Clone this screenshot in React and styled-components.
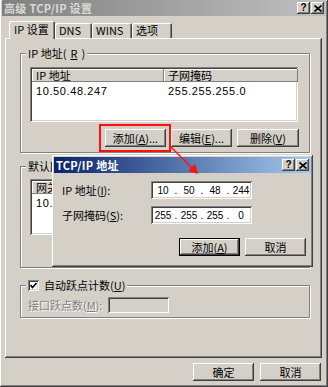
import React from "react";
import styled, { createGlobalStyle, css } from "styled-components";

const GlobalStyle = createGlobalStyle`
  html, body { margin: 0; padding: 0; background: #d4d0c8; }
  body {
    font-family: "Noto Sans CJK SC", "Liberation Sans", sans-serif;
    font-size: 11px;
    color: #000;
  }
  * { box-sizing: border-box; }
`;

// classic 3d edges
const raised = css`
  box-shadow: inset -1px -1px #404040, inset 1px 1px #ffffff,
    inset -2px -2px #808080, inset 2px 2px #d4d0c8;
`;
const sunken = css`
  box-shadow: inset 1px 1px #808080, inset -1px -1px #ffffff,
    inset 2px 2px #404040, inset -2px -2px #d4d0c8;
`;

const Window = styled.div`
  position: relative;
  width: 328px;
  height: 387px;
  padding: 0 2px 2px 2px;
  background: #d4d0c8;
  overflow: hidden;
  ${raised};
`;

const TitleBar = styled.div`
  height: 16px;
  display: flex;
  align-items: center;
  justify-content: space-between;
  padding: 0 2px 0 2px;
  background: ${(p) =>
    p.$active
      ? "linear-gradient(to right, #0a246a, #a6caf0)"
      : "linear-gradient(to right, #808080, #c0c0c0)"};
  color: ${(p) => (p.$active ? "#ffffff" : "#dcd9d2")};
  font-weight: bold;
  font-size: 11px;
  line-height: 14px;
  white-space: nowrap;
`;

const Caption = styled.span`
  letter-spacing: 0.3px;
`;

const CaptionButtons = styled.div`
  display: flex;
  gap: 1px;
`;

const CaptionButton = styled.div`
  width: 13px;
  height: 12px;
  background: #d4d0c8;
  ${raised};
  display: flex;
  align-items: center;
  justify-content: center;
  color: #000;
  font-family: "Liberation Sans", sans-serif;
  font-weight: bold;
  font-size: 10px;
  line-height: 10px;
`;

const Tabs = styled.div`
  display: flex;
  align-items: flex-end;
  height: 17px;
  margin: 5px 0 0 5px;
  position: relative;
  z-index: 1;
`;

const Tab = styled.div`
  width: ${(p) => p.$w}px;
  height: ${(p) => (p.$active ? 18 : 15)}px;
  margin-bottom: ${(p) => (p.$active ? -1 : 0)}px;
  margin-left: ${(p) => p.$ml || 0}px;
  padding: ${(p) => (p.$active ? "1px 0 0 5px" : "0 0 0 4px")};
  background: #d4d0c8;
  border-radius: 2px 2px 0 0;
  box-shadow: inset 1px 1px #ffffff, inset -1px 0 #404040, inset -2px 0 #808080;
  line-height: 15px;
  white-space: nowrap;
`;

const Panel = styled.div`
  width: 317px;
  height: 320px;
  margin-left: 3px;
  padding: 15px 0 0 15px;
  background: #d4d0c8;
  ${raised};
`;

const Group = styled.div`
  position: relative;
  width: 290px;
  height: ${(p) => p.$h}px;
  margin-top: ${(p) => p.$mt || 0}px;
  padding: ${(p) => p.$pad};
  border: 1px solid #808080;
  box-shadow: inset 1px 1px #ffffff, 1px 1px #ffffff;
`;

const Legend = styled.div`
  position: absolute;
  top: -8px;
  left: 5px;
  padding: 0 2px;
  display: flex;
  align-items: center;
  gap: 4px;
  background: #d4d0c8;
  line-height: 15px;
  white-space: nowrap;
`;

const ListView = styled.div`
  width: ${(p) => p.$w}px;
  height: ${(p) => p.$h}px;
  background: #ffffff;
  padding: 2px;
  overflow: hidden;
  ${sunken};
`;

const HeaderRow = styled.div`
  display: flex;
  height: 13px;
`;

const HeaderCell = styled.div`
  width: ${(p) => p.$w}px;
  flex-shrink: 0;
  padding-left: 4px;
  background: #d4d0c8;
  box-shadow: inset -1px -1px #808080, inset 1px 1px #ffffff;
  line-height: 13px;
  white-space: nowrap;
`;

const Row = styled.div`
  display: flex;
  height: 15px;
  align-items: center;
  margin-top: 1px;
`;

const Cell = styled.div`
  width: ${(p) => p.$w}px;
  flex-shrink: 0;
  padding-left: 4px;
  font-family: "Liberation Sans", "Noto Sans CJK SC", sans-serif;
  font-size: 11px;
  letter-spacing: 0.6px;
  white-space: nowrap;
`;

const ButtonRow = styled.div`
  display: flex;
  justify-content: flex-end;
  gap: ${(p) => p.$gap || 5}px;
  margin-top: ${(p) => p.$mt || 0}px;
  padding-right: ${(p) => p.$pr || 0}px;
`;

const Button = styled.div`
  width: ${(p) => p.$w || 61}px;
  height: ${(p) => p.$h || 18}px;
  display: flex;
  align-items: center;
  justify-content: center;
  background: #d4d0c8;
  line-height: 14px;
  white-space: nowrap;
  ${(p) =>
    p.$default
      ? css`
          box-shadow: inset 0 0 0 1px #000, inset -2px -2px #404040,
            inset 2px 2px #ffffff, inset -3px -3px #808080;
        `
      : raised};
`;

const CheckRow = styled.div`
  display: flex;
  align-items: center;
  gap: 5px;
`;

const CheckBox = styled.div`
  width: 11px;
  height: 11px;
  background: #ffffff;
  display: flex;
  align-items: center;
  justify-content: center;
  ${sunken};
`;

const FieldRow = styled.div`
  display: flex;
  align-items: center;
`;

const Label = styled.div`
  width: ${(p) => p.$w}px;
  flex-shrink: 0;
  color: ${(p) => (p.$disabled ? "#808080" : "#000")};
  text-shadow: ${(p) => (p.$disabled ? "1px 1px #ffffff" : "none")};
  white-space: nowrap;
  line-height: 14px;
`;

const TextField = styled.div`
  width: ${(p) => p.$w}px;
  height: ${(p) => p.$h || 18}px;
  background: ${(p) => (p.$disabled ? "#d4d0c8" : "#ffffff")};
  display: flex;
  align-items: center;
  padding-left: 3px;
  ${sunken};
`;

const Octet = styled.span`
  width: 18px;
  text-align: center;
  font-family: "Liberation Sans", sans-serif;
  font-size: 10px;
`;

const Dot = styled.span`
  width: 8px;
  text-align: center;
  font-family: "Liberation Sans", sans-serif;
  font-size: 10px;
`;

const Footer = styled.div`
  display: flex;
  justify-content: flex-end;
  gap: 6px;
  margin-top: 5px;
  padding-right: 5px;
`;

/* overlaid sub-dialog */
const Dialog = styled.div`
  position: absolute;
  left: 52px;
  top: 155px;
  width: 261px;
  height: 112px;
  padding: 2px;
  background: #d4d0c8;
  ${raised};
`;

const DialogBody = styled.div`
  display: flex;
  flex-direction: column;
  gap: 7px;
  padding: 8px 0 0 8px;
`;

const Highlight = styled.div`
  position: absolute;
  left: 99px;
  top: 124px;
  width: 72px;
  height: 28px;
  border: 2px solid #ff1010;
`;

const Arrow = styled.svg`
  position: absolute;
  left: 166px;
  top: 142px;
  pointer-events: none;
`;

const Close = () => (
  <svg width="8" height="7" viewBox="0 0 8 7">
    <path d="M0.5 0.5 L7.5 6.5 M7.5 0.5 L0.5 6.5" stroke="#000" strokeWidth="1.6" />
  </svg>
);

const Check = () => (
  <svg width="7" height="7" viewBox="0 0 7 7">
    <path d="M0.5 3 L2.5 5.5 L6.5 1" stroke="#000" strokeWidth="1.6" fill="none" />
  </svg>
);

const IpField = ({ parts }) => (
  <TextField $w={101}>
    {parts.map((p, i) => (
      <React.Fragment key={i}>
        <Octet>{p}</Octet>
        {i < 3 && <Dot>.</Dot>}
      </React.Fragment>
    ))}
  </TextField>
);

export default function App() {
  return (
    <>
      <GlobalStyle />
      <Window>
        <TitleBar>
          <Caption>高级 TCP/IP 设置</Caption>
          <CaptionButtons>
            <CaptionButton>?</CaptionButton>
            <CaptionButton><Close /></CaptionButton>
          </CaptionButtons>
        </TitleBar>

        <Tabs>
          <Tab $active $w={46} $ml={2}>IP 设置</Tab>
          <Tab $w={37}>DNS</Tab>
          <Tab $w={40}>WINS</Tab>
          <Tab $w={40}>选项</Tab>
        </Tabs>

        <Panel>
          <Group $h={100} $pad="13px 10px 0 9px">
            <Legend>IP 地址(<u>R</u>)</Legend>
            <ListView $w={268} $h={55}>
              <HeaderRow>
                <HeaderCell $w={132}>IP 地址</HeaderCell>
                <HeaderCell $w={134}>子网掩码</HeaderCell>
              </HeaderRow>
              <Row>
                <Cell $w={132}>10.50.48.247</Cell>
                <Cell $w={134}>255.255.255.0</Cell>
              </Row>
            </ListView>
            <ButtonRow $mt={7}>
              <Button>添加(<u>A</u>)...</Button>
              <Button>编辑(<u>E</u>)...</Button>
              <Button $w={62}>删除(<u>V</u>)</Button>
            </ButtonRow>
          </Group>

          <Group $h={102} $mt={13} $pad="12px 10px 0 9px">
            <Legend>默认网关(<u>F</u>):</Legend>
            <ListView $w={268} $h={56}>
              <HeaderRow>
                <HeaderCell $w={132}>网关</HeaderCell>
                <HeaderCell $w={134}>跃点数</HeaderCell>
              </HeaderRow>
              <Row>
                <Cell $w={132}>10.50.48.254</Cell>
                <Cell $w={134}>自动</Cell>
              </Row>
            </ListView>
            <ButtonRow $mt={5}>
              <Button>添加(<u>D</u>)...</Button>
              <Button>编辑(<u>T</u>)...</Button>
              <Button $w={62}>删除(<u>M</u>)</Button>
            </ButtonRow>
          </Group>

          <Group $h={33} $mt={17} $pad="11px 0 0 7px">
            <Legend>
              <CheckRow>
                <CheckBox><Check /></CheckBox>
                <span>自动跃点计数(<u>U</u>)</span>
              </CheckRow>
            </Legend>
            <FieldRow>
              <Label $w={80} $disabled>接口跃点数(<u>M</u>):</Label>
              <TextField $w={61} $h={16} $disabled />
            </FieldRow>
          </Group>
        </Panel>

        <Footer>
          <Button $w={61}>确定</Button>
          <Button $w={61}>取消</Button>
        </Footer>

        <Highlight />

        <Dialog>
          <TitleBar $active>
            <Caption>TCP/IP 地址</Caption>
            <CaptionButtons>
              <CaptionButton>?</CaptionButton>
              <CaptionButton><Close /></CaptionButton>
            </CaptionButtons>
          </TitleBar>
          <DialogBody>
            <FieldRow>
              <Label $w={89}>IP 地址(<u>I</u>):</Label>
              <IpField parts={["10", "50", "48", "244"]} />
            </FieldRow>
            <FieldRow>
              <Label $w={89}>子网掩码(<u>S</u>):</Label>
              <IpField parts={["255", "255", "255", "0"]} />
            </FieldRow>
            <ButtonRow $mt={7} $pr={5}>
              <Button $default>添加(<u>A</u>)</Button>
              <Button>取消</Button>
            </ButtonRow>
          </DialogBody>
        </Dialog>

        <Arrow width="36" height="36" viewBox="0 0 36 36">
          <line x1="4" y1="4" x2="27" y2="27" stroke="#ff1010" strokeWidth="1.5" />
          <polygon points="32,32 22,29 29,22" fill="#ff1010" />
        </Arrow>
      </Window>
    </>
  );
}
